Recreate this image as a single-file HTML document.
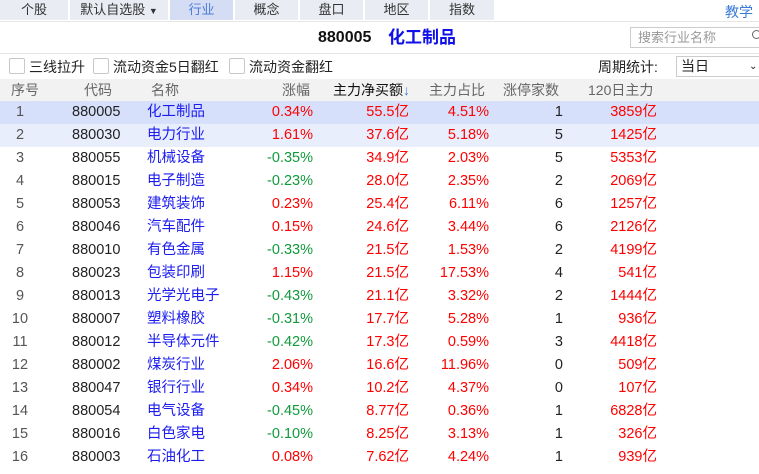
<!DOCTYPE html><html><head><meta charset="utf-8"><style>
*{margin:0;padding:0;box-sizing:border-box}
body{width:759px;height:474px;overflow:hidden;background:#fff;font-family:"Liberation Sans","Noto Sans CJK SC",sans-serif;font-size:14px;color:#222;position:relative}
.tabs{position:absolute;left:0;top:0;height:20px;width:494px;background:#e9ecf3}
.tab{position:absolute;top:0;height:20px;line-height:20px;text-align:center;font-size:13px;color:#333;border-right:2px solid #fff}
.a{position:absolute;white-space:nowrap;line-height:20px}
.line{position:absolute;left:0;width:759px;height:1px;background:#e6e6e6}
.cb{position:absolute;top:58px;width:16px;height:16px;border:1px solid #c8c8c8;background:#fff;border-radius:2px}
.hdr{position:absolute;left:0;top:79px;width:759px;height:22px;background:#f2f2f2;color:#666}
.hdr .a{top:1px}
.row{position:absolute;left:0;width:759px;height:23px;line-height:23px;font-size:14.5px}
.row span{position:absolute;white-space:nowrap}
.n{left:0;width:40px;text-align:center;color:#555}
.c{left:72px}
.m{left:147px;color:#1c1cf0}
.z{right:446px}
.j{right:350px;color:#f00}
.p{right:270px;color:#f00}
.t{right:196px}
.d{right:102px;color:#f00}
.r{color:#f00}.g{color:#129a3c}
</style></head><body>
<div class="tabs">
<div class="tab" style="left:0;width:70px">个股</div>
<div class="tab" style="left:70px;width:100px">默认自选股 <span style="font-size:9px">▼</span></div>
<div class="tab" style="left:170px;width:65px;background:#d5ddf5;color:#4a7ed8">行业</div>
<div class="tab" style="left:235px;width:65px">概念</div>
<div class="tab" style="left:300px;width:65px">盘口</div>
<div class="tab" style="left:365px;width:65px">地区</div>
<div class="tab" style="left:430px;width:64px;border-right:0">指数</div>
</div>
<div class="a" style="left:725px;top:2px;color:#3a7ad8;font-size:14px">教学</div>
<div class="line" style="top:21px"></div>
<div class="a" style="left:318px;top:28px;font-size:16px;font-weight:bold;color:#111">880005</div>
<div class="a" style="left:388px;top:28px;font-size:17px;font-weight:bold;color:#1010e8">化工制品</div>
<div class="a" style="left:630px;top:27px;width:135px;height:21px;border:1px solid #ccc;font-size:13px;color:#999;line-height:19px;padding-left:7px">搜索行业名称</div>
<div class="a" style="left:752px;top:30px;width:9px;height:9px;border:1.5px solid #666;border-radius:50%"></div>
<div class="line" style="top:53px"></div>
<div class="cb" style="left:9px"></div><div class="a" style="left:29px;top:57px">三线拉升</div>
<div class="cb" style="left:93px"></div><div class="a" style="left:113px;top:57px">流动资金5日翻红</div>
<div class="cb" style="left:229px"></div><div class="a" style="left:249px;top:57px">流动资金翻红</div>
<div class="a" style="left:598px;top:57px">周期统计:</div>
<div class="a" style="left:676px;top:56px;width:90px;height:21px;border:1px solid #ccc;line-height:19px;padding-left:4px">当日<span style="position:absolute;left:72px;font-size:10px">⌄</span></div>
<div class="hdr">
<span class="a" style="left:11px">序号</span>
<span class="a" style="left:84px">代码</span>
<span class="a" style="left:151px">名称</span>
<span class="a" style="left:282px">涨幅</span>
<span class="a" style="left:333px;color:#111">主力净买额<span style="color:#4a7ed8">↓</span></span>
<span class="a" style="left:429px">主力占比</span>
<span class="a" style="left:503px">涨停家数</span>
<span class="a" style="left:588px">120日主力</span>
</div>
<div class="row" style="top:101px;background:#d6e0fa"><span class="n">1</span><span class="c">880005</span><span class="m">化工制品</span><span class="z r">0.34%</span><span class="j">55.5亿</span><span class="p">4.51%</span><span class="t">1</span><span class="d">3859亿</span></div>
<div class="row" style="top:124px;background:#e8eefc"><span class="n">2</span><span class="c">880030</span><span class="m">电力行业</span><span class="z r">1.61%</span><span class="j">37.6亿</span><span class="p">5.18%</span><span class="t">5</span><span class="d">1425亿</span></div>
<div class="row" style="top:147px"><span class="n">3</span><span class="c">880055</span><span class="m">机械设备</span><span class="z g">-0.35%</span><span class="j">34.9亿</span><span class="p">2.03%</span><span class="t">5</span><span class="d">5353亿</span></div>
<div class="row" style="top:170px"><span class="n">4</span><span class="c">880015</span><span class="m">电子制造</span><span class="z g">-0.23%</span><span class="j">28.0亿</span><span class="p">2.35%</span><span class="t">2</span><span class="d">2069亿</span></div>
<div class="row" style="top:193px"><span class="n">5</span><span class="c">880053</span><span class="m">建筑装饰</span><span class="z r">0.23%</span><span class="j">25.4亿</span><span class="p">6.11%</span><span class="t">6</span><span class="d">1257亿</span></div>
<div class="row" style="top:216px"><span class="n">6</span><span class="c">880046</span><span class="m">汽车配件</span><span class="z r">0.15%</span><span class="j">24.6亿</span><span class="p">3.44%</span><span class="t">6</span><span class="d">2126亿</span></div>
<div class="row" style="top:239px"><span class="n">7</span><span class="c">880010</span><span class="m">有色金属</span><span class="z g">-0.33%</span><span class="j">21.5亿</span><span class="p">1.53%</span><span class="t">2</span><span class="d">4199亿</span></div>
<div class="row" style="top:262px"><span class="n">8</span><span class="c">880023</span><span class="m">包装印刷</span><span class="z r">1.15%</span><span class="j">21.5亿</span><span class="p">17.53%</span><span class="t">4</span><span class="d">541亿</span></div>
<div class="row" style="top:285px"><span class="n">9</span><span class="c">880013</span><span class="m">光学光电子</span><span class="z g">-0.43%</span><span class="j">21.1亿</span><span class="p">3.32%</span><span class="t">2</span><span class="d">1444亿</span></div>
<div class="row" style="top:308px"><span class="n">10</span><span class="c">880007</span><span class="m">塑料橡胶</span><span class="z g">-0.31%</span><span class="j">17.7亿</span><span class="p">5.28%</span><span class="t">1</span><span class="d">936亿</span></div>
<div class="row" style="top:331px"><span class="n">11</span><span class="c">880012</span><span class="m">半导体元件</span><span class="z g">-0.42%</span><span class="j">17.3亿</span><span class="p">0.59%</span><span class="t">3</span><span class="d">4418亿</span></div>
<div class="row" style="top:354px"><span class="n">12</span><span class="c">880002</span><span class="m">煤炭行业</span><span class="z r">2.06%</span><span class="j">16.6亿</span><span class="p">11.96%</span><span class="t">0</span><span class="d">509亿</span></div>
<div class="row" style="top:377px"><span class="n">13</span><span class="c">880047</span><span class="m">银行行业</span><span class="z r">0.34%</span><span class="j">10.2亿</span><span class="p">4.37%</span><span class="t">0</span><span class="d">107亿</span></div>
<div class="row" style="top:400px"><span class="n">14</span><span class="c">880054</span><span class="m">电气设备</span><span class="z g">-0.45%</span><span class="j">8.77亿</span><span class="p">0.36%</span><span class="t">1</span><span class="d">6828亿</span></div>
<div class="row" style="top:423px"><span class="n">15</span><span class="c">880016</span><span class="m">白色家电</span><span class="z g">-0.10%</span><span class="j">8.25亿</span><span class="p">3.13%</span><span class="t">1</span><span class="d">326亿</span></div>
<div class="row" style="top:446px"><span class="n">16</span><span class="c">880003</span><span class="m">石油化工</span><span class="z r">0.08%</span><span class="j">7.62亿</span><span class="p">4.24%</span><span class="t">1</span><span class="d">939亿</span></div>
</body></html>
